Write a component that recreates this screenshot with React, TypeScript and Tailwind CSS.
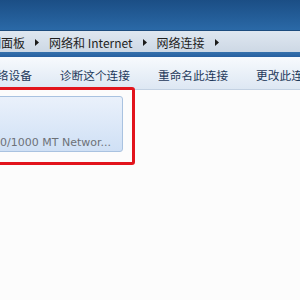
import React from 'react';

const crumbs = ['控制面板', '网络和 Internet', '网络连接'];
const actions = ['禁用此网络设备', '诊断这个连接', '重命名此连接', '更改此连接的设置'];

const Arrow = () => (
  <svg width="4" height="7" viewBox="0 0 4 7" className="mx-[10px] shrink-0">
    <path d="M0 0 L4 3.5 L0 7 Z" fill="#1a1a1a" />
  </svg>
);

export default function App() {
  return (
    <div
      className="relative w-[300px] h-[300px] overflow-hidden bg-[#fcfcfc] text-[12px]"
      style={{ fontFamily: '"Noto Sans CJK SC", "Noto Sans", sans-serif' }}
    >
      {/* window title area */}
      <div className="h-[30px] bg-gradient-to-b from-[#1b4e85] to-[#2a69a7]" />

      {/* address bar */}
      <div className="h-[22px] pt-[2px] border-t border-[#1d4c7e] bg-gradient-to-b from-[#dfe7f0] to-[#cdd8e5] flex items-center whitespace-nowrap text-[#1e1e1e]">
        <div className="flex items-center -ml-[23px]">
          {crumbs.map(c => (
            <React.Fragment key={c}>
              <span>{c}</span>
              <Arrow />
            </React.Fragment>
          ))}
        </div>
      </div>

      {/* divider strip */}
      <div className="h-[5px] bg-gradient-to-b from-[#3571ad] to-[#2760a0]" />

      {/* command bar */}
      <div className="h-[33px] pt-[4px] border-b border-[#c3d1e2] bg-gradient-to-b from-[#f7fafd] to-[#dde7f3] flex items-center whitespace-nowrap text-[#1e395b] text-[11.7px]">
        <div className="flex items-center gap-[28px] -ml-[50px]">
          {actions.map(a => (
            <span key={a}>{a}</span>
          ))}
        </div>
      </div>

      {/* connection tile */}
      <div className="mt-[6px] -ml-[10px] w-[133px] h-[56px] rounded-[3px] border border-[#a9c2e0] bg-gradient-to-b from-[#eaf1fb] to-[#cfe0f5] overflow-hidden flex flex-col justify-end items-end pb-[2px] pr-[11px]">
        <span
          className="whitespace-nowrap text-[#6d7178] leading-[13px]"
          style={{ fontFamily: '"DejaVu Sans", sans-serif', fontSize: '11px' }}
        >
          10/100/1000 MT Networ...
        </span>
      </div>

      {/* red highlight annotation */}
      <div className="absolute left-[-10px] top-[87px] w-[145px] h-[78px] border-[3px] border-[#e2141c] rounded-[3px]" />
    </div>
  );
}
